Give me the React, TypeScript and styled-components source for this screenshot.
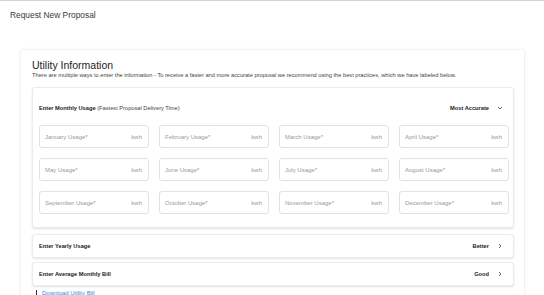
import React from "react";
import styled, { createGlobalStyle } from "styled-components";

const Global = createGlobalStyle`
  html, body { margin: 0; padding: 0; background: #fff; }
  body { font-family: "Liberation Sans", Arial, sans-serif; color: #333; overflow: hidden; }
  * { box-sizing: border-box; }
`;

const Page = styled.div`
  width: 544px;
  height: 295px;
  border-top: 1px solid #d4d4d4;
  display: flex;
  flex-direction: column;
`;

const PageTitle = styled.h1`
  margin: 0;
  padding: 10px 0 0 10px;
  height: 48px;
  font-size: 8.4px;
  line-height: 9px;
  font-weight: 400;
  color: #3a3a3a;
  flex-shrink: 0;
`;

const Card = styled.section`
  margin: 0 19px 0 20px;
  padding: 10px 10px 0 11px;
  border: 1px solid #f1f1f1;
  border-bottom: none;
  border-radius: 3px 3px 0 0;
  box-shadow: 0 0 4px rgba(0, 0, 0, 0.04);
  flex: 1;
`;

const Heading = styled.h2`
  margin: 0;
  font-size: 10.5px;
  font-weight: 400;
  color: #1e1e1e;
  line-height: 10px;
`;

const Desc = styled.p`
  margin: 1px 0 0;
  font-size: 5.7px;
  color: #444;
  line-height: 9px;
`;

const Panel = styled.div<{ $mt: number }>`
  margin-top: ${(p) => p.$mt}px;
  border: 1px solid #ececec;
  border-radius: 3px;
  box-shadow: 0 1px 2px rgba(0, 0, 0, 0.12);
  background: #fff;
`;

const PanelHeader = styled.div<{ $h: number; $pt?: number }>`
  height: ${(p) => p.$h}px;
  padding-top: ${(p) => p.$pt ?? 0}px;
  padding-right: 10px;
  padding-left: 6px;
  display: flex;
  align-items: center;
  justify-content: space-between;
  font-size: 5.7px;
  color: #222;
`;

const Strong = styled.span`
  font-weight: 700;
`;

const Light = styled.span`
  color: #444;
`;

const Right = styled.div`
  display: flex;
  align-items: center;
  gap: 8px;
  font-weight: 700;
`;

const Grid = styled.div`
  display: grid;
  grid-template-columns: repeat(4, 110px);
  column-gap: 10px;
  row-gap: 10px;
  padding: 0 0 13px 6px;
`;

const Field = styled.div`
  height: 23px;
  border: 1px solid #e2e2e2;
  border-radius: 3px;
  display: flex;
  align-items: center;
  justify-content: space-between;
  padding: 0 6px 0 5px;
  font-size: 6px;
  color: #9a9a9a;
`;

const LinkRow = styled.div`
  display: flex;
  align-items: center;
  gap: 5px;
  margin-top: 4px;
  padding-left: 4px;
  font-size: 6px;
  line-height: 7px;
  color: #2d8cf0;
`;

const Bar = styled.span`
  width: 1px;
  height: 7px;
  background: #333;
`;

const Chevron = ({ down }: { down?: boolean }) => (
  <svg width="6" height="6" viewBox="0 0 6 6" fill="none">
    {down ? (
      <path d="M1 2l2 2 2-2" stroke="#555" strokeWidth="0.9" />
    ) : (
      <path d="M2 1l2 2-2 2" stroke="#555" strokeWidth="0.9" />
    )}
  </svg>
);

const months = [
  "January", "February", "March", "April",
  "May", "June", "July", "August",
  "September", "October", "November", "December",
];

export default function App() {
  return (
    <>
      <Global />
      <Page>
        <PageTitle>Request New Proposal</PageTitle>
        <Card>
          <Heading>Utility Information</Heading>
          <Desc>
            There are multiple ways to enter the information - To receive a faster and more accurate proposal we recommend using the best practices, which we have labeled below.
          </Desc>
          <Panel $mt={7}>
            <PanelHeader $h={37} $pt={3}>
              <span>
                <Strong>Enter Monthly Usage</Strong> <Light>(Fastest Proposal Delivery Time)</Light>
              </span>
              <Right>
                Most Accurate <Chevron down />
              </Right>
            </PanelHeader>
            <Grid>
              {months.map((m) => (
                <Field key={m}>
                  <span>{m} Usage*</span>
                  <span>kwh</span>
                </Field>
              ))}
            </Grid>
          </Panel>
          <Panel $mt={6}>
            <PanelHeader $h={22}>
              <Strong>Enter Yearly Usage</Strong>
              <Right>
                Better <Chevron />
              </Right>
            </PanelHeader>
          </Panel>
          <Panel $mt={4}>
            <PanelHeader $h={22}>
              <Strong>Enter Average Monthly Bill</Strong>
              <Right>
                Good <Chevron />
              </Right>
            </PanelHeader>
          </Panel>
          <LinkRow>
            <Bar />
            <span>Download Utility Bill</span>
          </LinkRow>
        </Card>
      </Page>
    </>
  );
}
